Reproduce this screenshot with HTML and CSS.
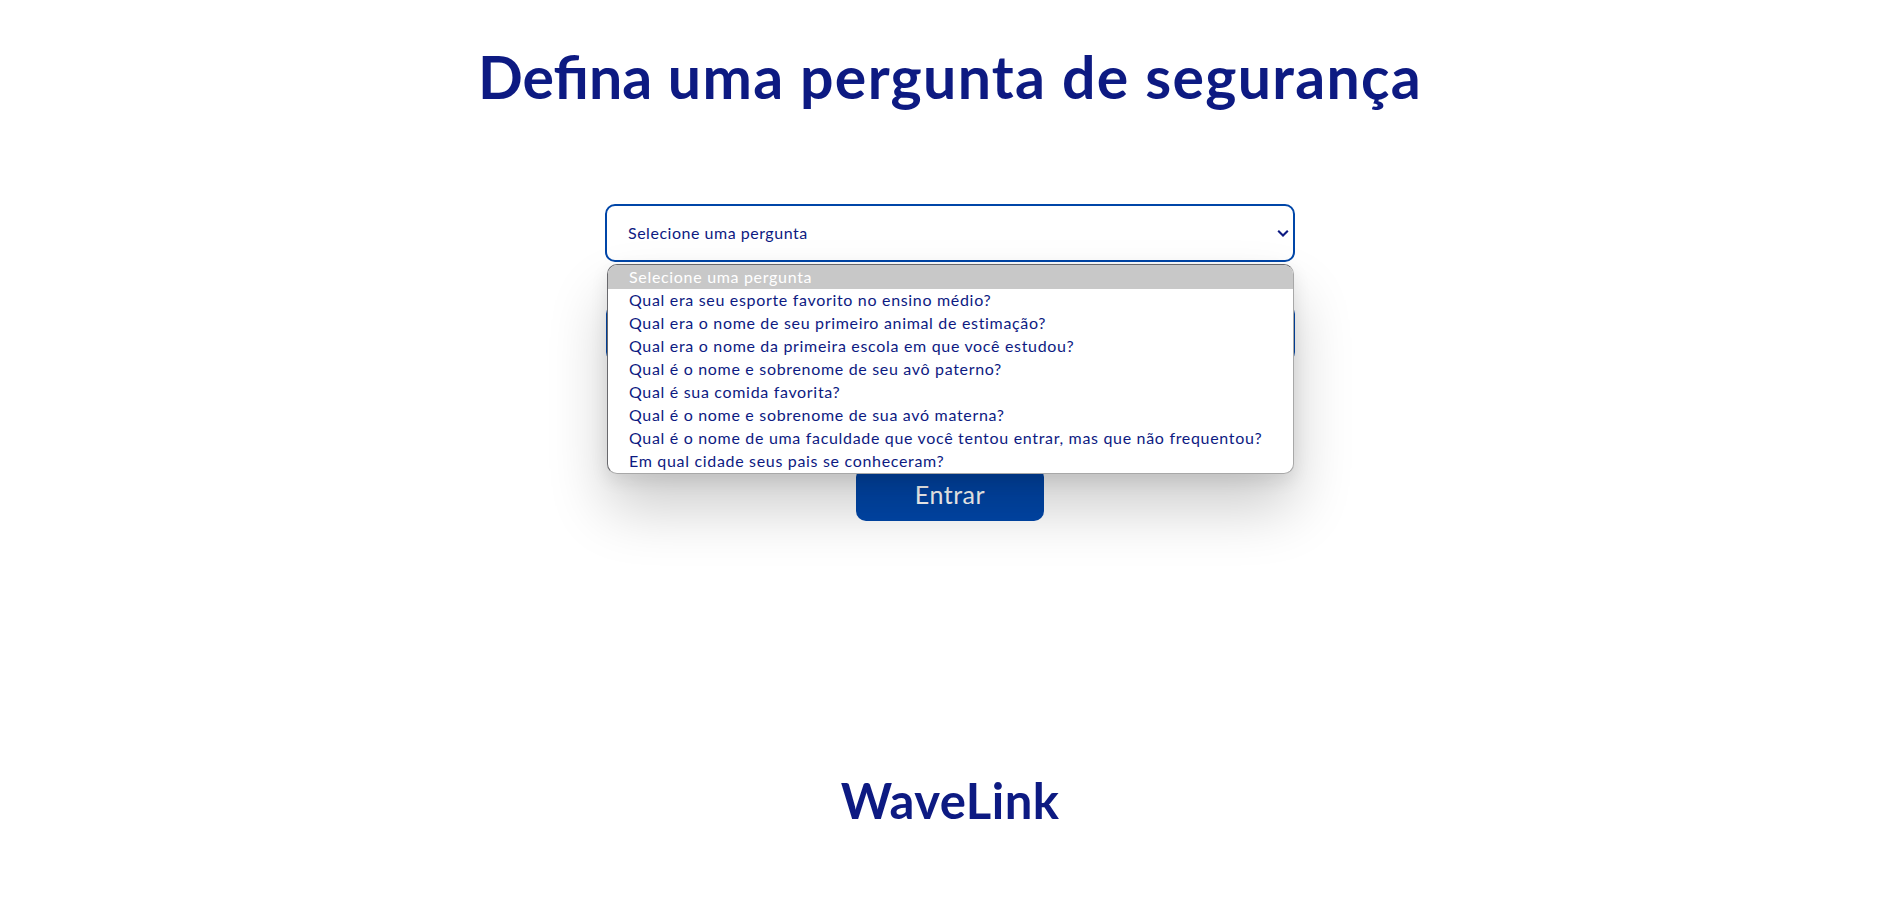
FILE: index.html
```html
<!DOCTYPE html>
<html lang="pt-BR">
<head>
<meta charset="utf-8">
<title>WaveLink</title>
<link rel="stylesheet" href="styles.css">
</head>
<body>
<main class="page">
  <h1 class="title"><span class="title-lead">Defina</span> uma pergunta de segurança</h1>
  <form class="form">
    <div class="select">
      <span class="select-label">Selecione uma pergunta</span>
      <svg class="chevron" width="12" height="8" viewBox="0 0 12 8"><path d="M1.200 1.800 6 6.500l4.800-4.700" fill="none" stroke="#0d1a82" stroke-width="2.100"/></svg>
      <ul class="menu">
        <li class="option selected"><span>Selecione uma pergunta</span></li>
        <li class="option"><span>Qual era seu esporte favorito no ensino médio?</span></li>
        <li class="option"><span>Qual era o nome de seu primeiro animal de estimação?</span></li>
        <li class="option"><span>Qual era o nome da primeira escola em que você estudou?</span></li>
        <li class="option"><span>Qual é o nome e sobrenome de seu avô paterno?</span></li>
        <li class="option"><span>Qual é sua comida favorita?</span></li>
        <li class="option"><span>Qual é o nome e sobrenome de sua avó materna?</span></li>
        <li class="option"><span>Qual é o nome de uma faculdade que você tentou entrar, mas que não frequentou?</span></li>
        <li class="option"><span>Em qual cidade seus pais se conheceram?</span></li>
      </ul>
    </div>
    <div class="answer"></div>
    <button class="submit" type="button">Entrar</button>
  </form>
  <footer class="brand"><span>WaveLink</span></footer>
</main>
</body>
</html>
```
FILE: styles.css
```css
* { box-sizing: border-box; }
body {
  margin: 0;
  height: 915px;
  overflow: hidden;
  background: #fff;
  color: #0d1a82;
  font-family: Lato, "Open Sans", sans-serif;
}
.page {
  display: flex;
  flex-direction: column;
  align-items: center;
  padding: 39px 0 0 4px;
}
.title {
  margin: 0;
  height: 76px;
  font-size: 59px;
  line-height: 76px;
  font-weight: 700;
  letter-spacing: 1.3px;
  white-space: nowrap;
}
.title-lead { letter-spacing: 0; }
.form {
  display: flex;
  flex-direction: column;
  align-items: center;
  width: 690px;
  margin-top: 89px;
}
.select {
  position: relative;
  display: flex;
  align-items: center;
  justify-content: space-between;
  width: 690px;
  height: 58px;
  padding: 0 4px 0 21px;
  border: 2px solid #0046a8;
  border-radius: 10px;
  background: #fff;
  font-size: 16px;
  letter-spacing: 0.52px;
}
.select-label {
  padding-bottom: 2px;
  white-space: nowrap;
}
.menu {
  position: absolute;
  z-index: 2;
  top: 58px;
  left: 0;
  width: 687px;
  height: 210px;
  margin: 0;
  padding: 0;
  overflow: hidden;
  list-style: none;
  white-space: nowrap;
  background: #fff;
  border: 1px solid #a8a8a8;
  border-top-color: #68686c;
  border-left-color: #68686c;
  border-radius: 10px;
  box-shadow: 0 6px 18px rgba(0, 0, 0, 0.09), 0 34px 60px rgba(0, 0, 0, 0.2);
}
.option {
  height: 23px;
  padding-left: 21px;
  line-height: 21px;
  letter-spacing: 0.68px;
}
.selected {
  height: 24px;
  line-height: 23px;
  background: #c8c8c8;
  color: #fff;
}
.answer {
  width: 689px;
  height: 58px;
  margin-top: 42px;
  border: 2px solid #0046a8;
  border-radius: 10px;
}
.submit {
  width: 188px;
  height: 54px;
  margin-top: 105px;
  padding: 0;
  border: 0;
  border-radius: 10px;
  background: #0046a8;
  color: #fff;
  font: 400 25px/54px Lato, "Open Sans", sans-serif;
  letter-spacing: 0.5px;
}
.brand {
  height: 64px;
  margin-top: 247px;
  font-size: 49px;
  line-height: 64px;
  font-weight: 700;
  letter-spacing: 0.45px;
}
```
